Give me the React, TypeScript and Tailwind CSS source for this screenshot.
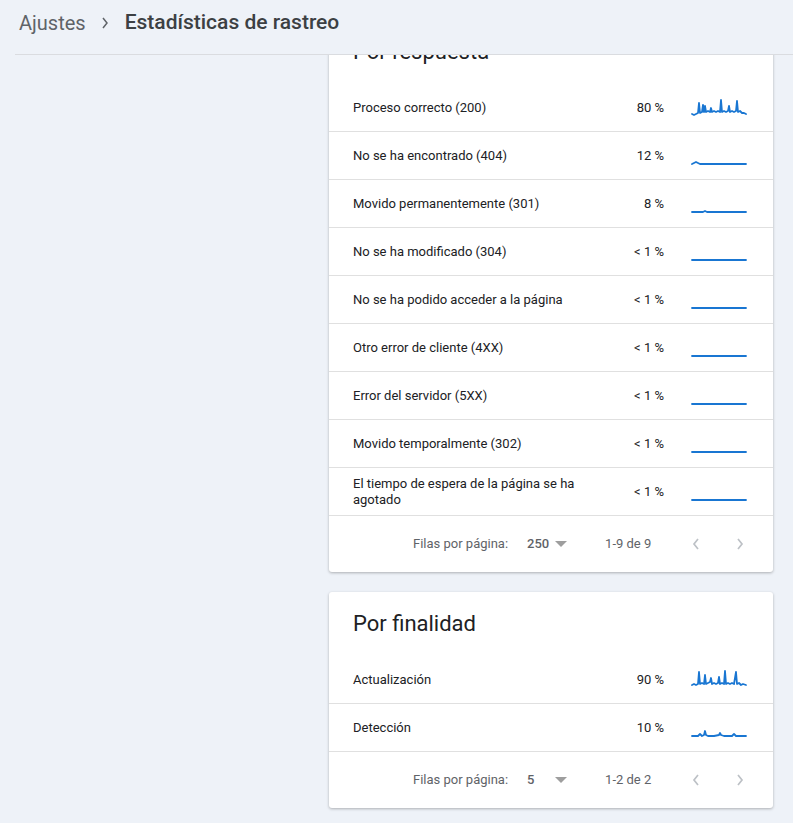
import React from 'react';

type Row = { label: string; pct: string; spark: string };

const flat = '2,19 56,19';

const respuesta: Row[] = [
  {
    label: 'Proceso correcto (200)',
    pct: '80 %',
    spark:
      '2,17 4,18 6,17 8,16 9,6 10,16 12,15 13,8 14,15 15,9 16,15 18,14 20,15 21,11 22,15 24,14 26,15 28,14 30,15 31,3 32,15 34,14 36,15 38,14 39,9 40,15 42,14 44,15 46,14 47,4 48,15 50,14 52,16 54,16 56,17',
  },
  { label: 'No se ha encontrado (404)', pct: '12 %', spark: '2,19 4,18 6,17 8,18 10,19 56,19' },
  { label: 'Movido permanentemente (301)', pct: '8 %', spark: '2,19 13,19 15,18 17,19 56,19' },
  { label: 'No se ha modificado (304)', pct: '< 1 %', spark: flat },
  { label: 'No se ha podido acceder a la página', pct: '< 1 %', spark: flat },
  { label: 'Otro error de cliente (4XX)', pct: '< 1 %', spark: flat },
  { label: 'Error del servidor (5XX)', pct: '< 1 %', spark: flat },
  { label: 'Movido temporalmente (302)', pct: '< 1 %', spark: flat },
  { label: 'El tiempo de espera de la página se ha agotado', pct: '< 1 %', spark: flat },
];

const finalidad: Row[] = [
  {
    label: 'Actualización',
    pct: '90 %',
    spark:
      '2,16 4,15 6,16 8,15 9,3 10,15 12,14 14,15 15,6 16,15 18,14 20,13 21,9 22,15 24,14 26,15 28,14 29,8 30,15 32,14 34,15 35,2 36,15 38,14 40,15 42,14 44,15 46,3 47,15 49,14 51,16 53,15 56,16',
  },
  {
    label: 'Detección',
    pct: '10 %',
    spark: '2,19 8,19 10,17 12,19 14,18 15,14 16,18 18,19 24,19 29,18 30,16 31,18 34,19 42,19 44,17 46,19 56,19',
  },
];

function Spark({ points }: { points: string }) {
  return (
    <svg width="58" height="21" viewBox="0 0 58 21" className="ml-[26px] shrink-0">
      <polyline points={points} fill="none" stroke="#1976d2" strokeWidth="1.8" strokeLinejoin="round" strokeLinecap="round" />
    </svg>
  );
}

function Chevron({ dir }: { dir: 'left' | 'right' }) {
  return (
    <svg width="10" height="14" viewBox="0 0 10 14">
      <polyline
        points={dir === 'left' ? '7,2 3,7 7,12' : '3,2 7,7 3,12'}
        fill="none"
        stroke="#bdc1c6"
        strokeWidth="1.7"
      />
    </svg>
  );
}

function Card({ title, rows, perPage, range }: { title: string; rows: Row[]; perPage: string; range: string }) {
  return (
    <div className="w-[444px] bg-white rounded-[3px] shadow-[0_1px_3px_rgba(0,0,0,0.28)]">
      <div className="h-[64px] pt-[18px] px-[24px] text-[22px] leading-[28px] text-[#202124]">{title}</div>
      {rows.map((r) => (
        <div key={r.label} className="h-[48px] flex items-center border-b border-[#e0e0e0] pl-[24px] pr-[25px]">
          <div className="w-[240px] text-[13px] leading-[16px] text-[#202124]">{r.label}</div>
          <div className="flex-1 text-right text-[13px] text-[#202124]">{r.pct}</div>
          <Spark points={r.spark} />
        </div>
      ))}
      <div className="h-[56px] flex items-center pl-[84px] text-[13px] text-[#5f6368]">
        <span>Filas por página:</span>
        <span className="ml-[19px] w-[28px] font-medium">{perPage}</span>
        <span className="w-0 h-0 border-l-[6px] border-r-[6px] border-t-[6px] border-l-transparent border-r-transparent border-t-[#9e9e9e]" />
        <span className="ml-[38px]">{range}</span>
        <span className="ml-[40px] flex">
          <Chevron dir="left" />
        </span>
        <span className="ml-[34px] flex">
          <Chevron dir="right" />
        </span>
      </div>
    </div>
  );
}

export default function App() {
  return (
    <div className="h-[823px] w-[793px] overflow-hidden bg-[#eef2f8] font-['Roboto',sans-serif]">
      <div className="relative z-10 bg-[#eef2f8]">
        <div className="ml-[15px] h-[55px] border-b border-[#dadce0] flex items-center pl-[4px] pb-[8px]">
          <span className="text-[20px] text-[#5f6368]">Ajustes</span>
          <svg width="10" height="14" viewBox="0 0 10 14" className="ml-[14px] mr-[15px]">
            <polyline points="3,2 7,7 3,12" fill="none" stroke="#5f6368" strokeWidth="1.5" />
          </svg>
          <span className="text-[21px] font-medium text-[#3c4043]">Estadísticas de rastreo</span>
        </div>
      </div>
      <div className="-mt-[35px] pl-[329px] flex flex-col gap-[20px]">
        <Card title="Por respuesta" rows={respuesta} perPage="250" range="1-9 de 9" />
        <Card title="Por finalidad" rows={finalidad} perPage="5" range="1-2 de 2" />
      </div>
    </div>
  );
}
